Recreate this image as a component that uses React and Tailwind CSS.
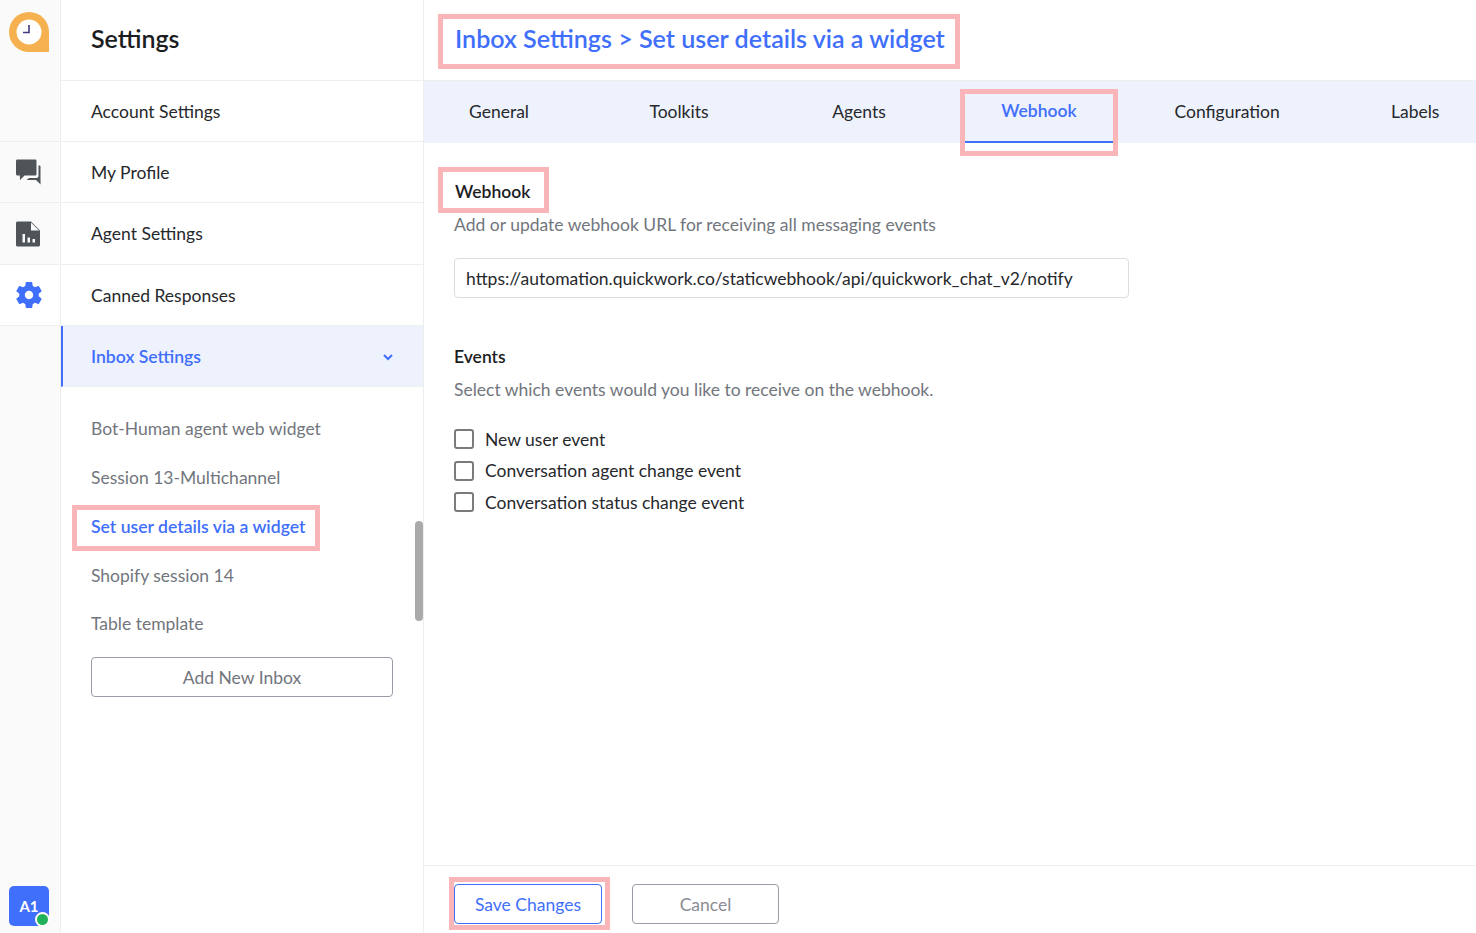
const HIGHLIGHT = 'border-[5px] border-[#fab5b9]';

const navRows = ['Account Settings', 'My Profile', 'Agent Settings', 'Canned Responses'];
const tabs = ['General', 'Toolkits', 'Agents', 'Webhook', 'Configuration', 'Labels'];
const events = ['New user event', 'Conversation agent change event', 'Conversation status change event'];

const Logo = () => (
  <svg width="40" height="40" viewBox="0 0 40 40">
    <path d="M20 0a20 20 0 0 1 20 20v20H20a20 20 0 0 1 0-40z" fill="#f5b14f" />
    <circle cx="20" cy="20" r="12.5" fill="#fff" />
    <path d="M20 13v7.5h-6" fill="none" stroke="#3d3a7c" strokeWidth="1.6" />
  </svg>
);

const ChatIcon = () => (
  <svg width="26" height="26" viewBox="0 0 26 26" fill="#4f5459">
    <path d="M1 2c0-.8.6-1.500 1.400-1.500h17.700c.8 0 1.400.7 1.400 1.500v13c0 .8-.6 1.500-1.400 1.500H9.500L5 21l-.2-4.500H2.400c-.8 0-1.400-.7-1.400-1.500z" />
    <path d="M23.500 6.500h.8c.7 0 1.200.5 1.200 1.200V21l.1 4.500-4.600-4.500H11.500l2.600-2h7.400c1.100 0 2-.9 2-2z" />
  </svg>
);

const ReportIcon = () => (
  <svg width="26" height="26" viewBox="0 0 26 26">
    <path d="M2.500 0.500H16l9 9V24c0 .8-.7 1.500-1.500 1.500H2.500C1.700 25.500 1 24.800 1 24V2C1 1.200 1.700.5 2.500.5z" fill="#4f5459" />
    <path d="M16 1.500v8h8z" fill="#fafafa" />
    <path d="M7.500 13h2.500v8.500H7.500zM12.500 16.500H15v5h-2.500zM17.500 18h2.500v3.500h-2.500z" fill="#fafafa" />
  </svg>
);

const GearIcon = () => (
  <svg width="26" height="26" viewBox="2.600 2.400 18.800 19.200" fill="#3f6ffb">
    <path d="M19.140 12.940c.04-.3.06-.61.06-.94 0-.32-.02-.64-.07-.94l2.030-1.580c.18-.14.23-.41.12-.61l-1.920-3.320c-.12-.22-.37-.29-.59-.22l-2.390.96c-.5-.38-1.030-.7-1.620-.94l-.36-2.540c-.04-.24-.24-.41-.48-.41h-3.840c-.24 0-.43.17-.47.41l-.36 2.540c-.59.24-1.130.57-1.620.94l-2.390-.96c-.22-.08-.47 0-.59.22L2.740 8.870c-.12.21-.08.47.12.61l2.030 1.580c-.05.3-.09.63-.09.94s.02.64.07.94l-2.030 1.580c-.18.14-.23.41-.12.61l1.920 3.320c.12.22.37.29.59.22l2.390-.96c.5.38 1.030.7 1.620.94l.36 2.540c.05.24.24.41.48.41h3.840c.24 0 .44-.17.47-.41l.36-2.540c.59-.24 1.130-.56 1.620-.94l2.390.96c.22.08.47 0 .59-.22l1.920-3.320c.12-.22.07-.47-.12-.61l-2.010-1.580zM12 15.100c-1.710 0-3.100-1.390-3.100-3.100s1.390-3.100 3.100-3.100 3.100 1.390 3.100 3.100-1.390 3.100-3.100 3.100z" />
  </svg>
);

const Rail = () => (
  <div className="w-[61px] h-full shrink-0 bg-[#fafafa] border-r border-[#eeeeee] flex flex-col">
    <div className="h-[142px] pt-3 pl-[9px] border-b border-[#eeeeee] mr-px">
      <Logo />
    </div>
    <div className="h-[61px] flex items-center pl-[15px] border-b border-[#eeeeee] mr-px"><ChatIcon /></div>
    <div className="h-[62px] flex items-center pl-[15px] border-b border-[#eeeeee] mr-px"><ReportIcon /></div>
    <div className="h-[61px] flex items-center pl-[16px] border-b border-[#eeeeee] bg-white"><GearIcon /></div>
    <div className="mt-auto pl-[9px] pb-[7px]">
      <div className="relative w-10 h-10 rounded-[5px] bg-[#3f6ffb] flex items-center justify-center text-white text-[15px] font-bold">
        A1
        <span className="absolute -right-[1px] -bottom-[1px] w-[15px] h-[15px] rounded-full bg-[#1fb25a] border-2 border-white" />
      </div>
    </div>
  </div>
);

const Sidebar = () => (
  <div className="relative w-[363px] h-full shrink-0 border-r border-[#eeeeee] flex flex-col">
    <div className="h-[81px] shrink-0 pl-[30px] flex items-center border-b border-[#eeeeee] text-[25px] font-semibold text-[#1c1d1f] pb-[2px]">
      Settings
    </div>
    {navRows.map((row, i) => (
      <div
        key={row}
        className={`${i === 2 ? 'h-[62px]' : 'h-[61px]'} shrink-0 pl-[30px] pt-[2px] flex items-center border-b border-[#eeeeee] text-[17.5px] text-[#26282c]`}
      >
        {row}
      </div>
    ))}
    <div className="h-[61px] shrink-0 pl-[28px] pr-[30px] pt-[2px] flex items-center justify-between bg-[#eef2fd] border-l-2 border-[#3f6ffb] border-b border-b-[#eeeeee] text-[17.6px] font-semibold text-[#3f6ffb]">
      Inbox Settings
      <svg width="10" height="7" viewBox="0 0 10 7" fill="none" stroke="#3f6ffb" strokeWidth="2">
        <path d="M1 1l4 4 4-4" />
      </svg>
    </div>
    <div className="flex flex-col pl-[30px] pt-[17px] text-[17.5px] text-[#72767d]">
      <div className="h-[49px] pt-[2px] flex items-center">Bot-Human agent web widget</div>
      <div className="h-[49px] pt-[2px] flex items-center">Session 13-Multichannel</div>
      <div className={`-ml-[19px] mt-[3px] w-[248px] h-[46px] pl-[14px] pb-[2px] flex items-center text-[17.6px] font-semibold text-[#3f6ffb] ${HIGHLIGHT}`}>
        Set user details via a widget
      </div>
      <div className="h-[49px] pt-[2px] flex items-center">Shopify session 14</div>
      <div className="h-[47px] pt-[2px] flex items-center">Table template</div>
      <button className="mt-[10px] w-[302px] h-10 pt-[2px] rounded-[4px] border border-[#9a9ca6] bg-white text-[17.5px] text-[#72767d]">
        Add New Inbox
      </button>
    </div>
    <div className="absolute right-0 top-[521px] w-2 h-[100px] rounded-full bg-[#aaaaaa]" />
  </div>
);

const Tabs = () => (
  <div className="h-[62px] shrink-0 bg-[#eef2fd] flex gap-8 pl-px">
    {tabs.map((tab) => (
      tab === 'Webhook' ? (
        <div key={tab} className="relative shrink-0 min-w-[148px] px-[29.500px] h-full flex items-center justify-center border-b-2 border-[#3f6ffb] text-[17.5px] font-semibold text-[#3f6ffb]">
          {tab}
          <span className={`absolute -left-[5px] -right-[5px] top-[8px] -bottom-[15px] ${HIGHLIGHT}`} />
        </div>
      ) : (
        <div key={tab} className="shrink-0 min-w-[148px] px-[29.500px] h-full flex items-center justify-center text-[17.5px] text-[#26282c]">
          {tab}
        </div>
      )
    ))}
  </div>
);

const Main = () => (
  <div className="flex-1 min-w-0 h-full flex flex-col">
    <div className="h-[81px] shrink-0 pl-[14px] pt-[14px] border-b border-[#eeeeee]">
      <div className={`w-[522px] h-[55px] pl-3 pb-[5px] flex items-center text-[25.1px] font-semibold text-[#3f6ffb] ${HIGHLIGHT}`}>
        Inbox Settings &gt; Set user details via a widget
      </div>
    </div>
    <Tabs />
    <div className="flex-1 min-h-0 pl-[14px] pt-6">
      <div className={`w-[111px] h-[46px] pl-3 pt-[5px] flex items-center text-[17.5px] font-semibold text-[#1c1d1f] ${HIGHLIGHT}`}>
        Webhook
      </div>
      <div className="pl-[16px]">
        <p className="text-[17.5px] leading-6 text-[#72767d]">Add or update webhook URL for receiving all messaging events</p>
        <div className="mt-[21px] w-[675px] h-10 rounded-[4px] border border-[#dddddd] pl-[11px] pt-[3px] flex items-center text-[17.5px] text-[#26282c]">
          https://automation.quickwork.co/staticwebhook/api/quickwork_chat_v2/notify
        </div>
        <h3 className="mt-[47px] text-[17.5px] leading-6 font-semibold text-[#1c1d1f]">Events</h3>
        <p className="mt-[9px] text-[17.5px] leading-6 text-[#72767d]">Select which events would you like to receive on the webhook.</p>
        <div className="mt-[27px] flex flex-col gap-[11.500px]">
          {events.map((event) => (
            <label key={event} className="h-5 flex items-center gap-[11px] text-[17.5px] text-[#26282c]">
              <span className="w-5 h-5 rounded-[3px] border-2 border-[#7b7b7b] bg-white" />
              <span className="pt-[2px]">{event}</span>
            </label>
          ))}
        </div>
      </div>
    </div>
    <div className="h-[68px] shrink-0 border-t border-[#eeeeee] flex items-start pt-[11px] pl-[25px]">
      <div className={`w-[161px] h-[53px] pt-[2px] pl-0 ${HIGHLIGHT}`}>
        <button className="w-[148px] h-10 pt-[2px] rounded-[4px] border border-[#3f6ffb] bg-white text-[17.5px] text-[#3f6ffb]">
          Save Changes
        </button>
      </div>
      <button className="ml-[22px] mt-[7px] w-[147px] h-10 pt-[2px] rounded-[4px] border border-[#9a9ca6] bg-white text-[17.5px] text-[#8a8d94]">
        Cancel
      </button>
    </div>
  </div>
);

export default function App() {
  return (
    <div className="w-[1476px] h-[933px] flex overflow-hidden bg-white font-['Lato',sans-serif]">
      <Rail />
      <Sidebar />
      <Main />
    </div>
  );
}
